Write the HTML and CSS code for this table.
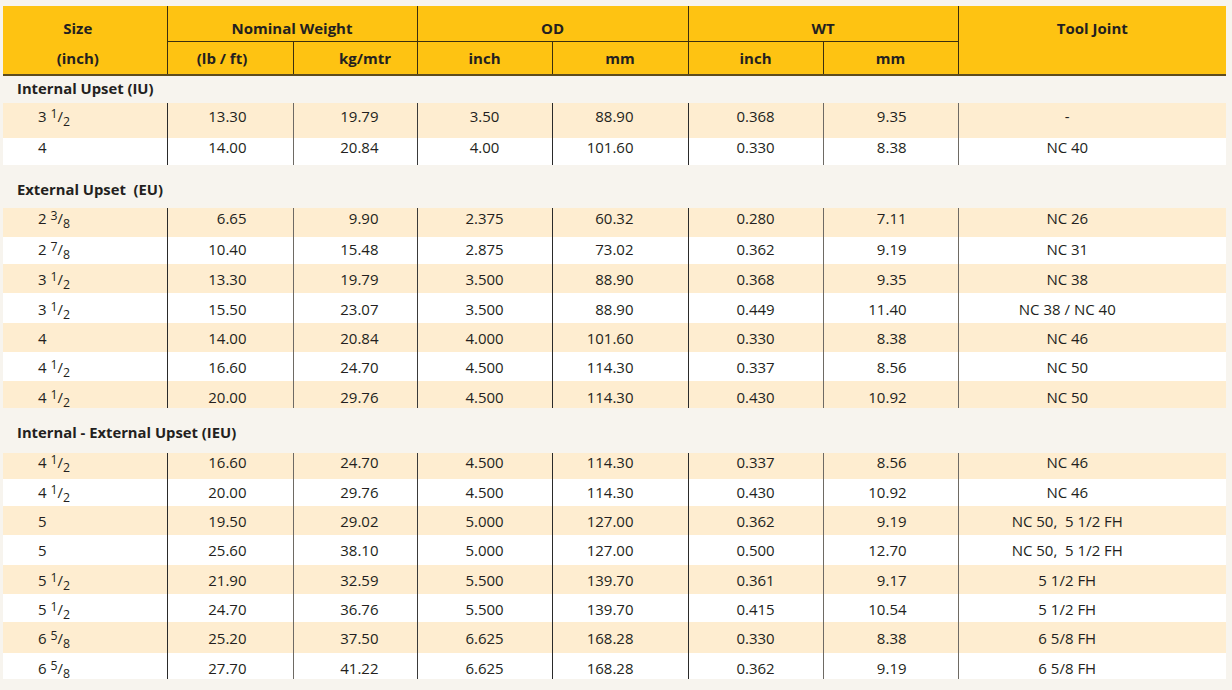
FILE: index.html
```html
<!DOCTYPE html>
<html lang="en">
<head>
<meta charset="utf-8">
<title>Drill Pipe Specifications</title>
<link rel="stylesheet" href="styles.css">
</head>
<body>
<div class="wrap">
<table class="spec">
  <colgroup>
    <col class="c1"><col class="c2"><col class="c3"><col class="c4"><col class="c5"><col class="c6"><col class="c7"><col class="c8">
  </colgroup>
  <thead>
    <tr class="h1">
      <th class="h-size">Size</th>
      <th colspan="2" class="grp">Nominal Weight</th>
      <th colspan="2" class="grp">OD</th>
      <th colspan="2" class="grp">WT</th>
      <th class="h-tool">Tool Joint</th>
    </tr>
    <tr class="h2">
      <th class="h-size">(inch)</th>
      <th class="h-lb">(lb / ft)</th>
      <th class="h-kg">kg/mtr</th>
      <th>inch</th>
      <th>mm</th>
      <th>inch</th>
      <th>mm</th>
      <th></th>
    </tr>
  </thead>
  <tbody>
    <tr class="sec sec-iu"><td colspan="8">Internal Upset (IU)</td></tr>
    <tr class="row alt h35 p5"><td>3 <span class="num">1</span>/<span class="den">2</span></td><td>13.30</td><td>19.79</td><td>3.50</td><td>88.90</td><td>0.368</td><td>9.35</td><td>-</td></tr>
    <tr class="row h27 p1"><td>4</td><td>14.00</td><td>20.84</td><td>4.00</td><td>101.60</td><td>0.330</td><td>8.38</td><td>NC 40</td></tr>

    <tr class="sec sec-eu"><td colspan="8">External Upset&nbsp; (EU)</td></tr>
    <tr class="row alt h29 p2"><td>2 <span class="num">3</span>/<span class="den">8</span></td><td>6.65</td><td>9.90</td><td>2.375</td><td>60.32</td><td>0.280</td><td>7.11</td><td>NC 26</td></tr>
    <tr class="row h27 p4"><td>2 <span class="num">7</span>/<span class="den">8</span></td><td>10.40</td><td>15.48</td><td>2.875</td><td>73.02</td><td>0.362</td><td>9.19</td><td>NC 31</td></tr>
    <tr class="row alt h29 p7"><td>3 <span class="num">1</span>/<span class="den">2</span></td><td>13.30</td><td>19.79</td><td>3.500</td><td>88.90</td><td>0.368</td><td>9.35</td><td>NC 38</td></tr>
    <tr class="row h30 p8"><td>3 <span class="num">1</span>/<span class="den">2</span></td><td>15.50</td><td>23.07</td><td>3.500</td><td>88.90</td><td>0.449</td><td>11.40</td><td>NC 38 / NC 40</td></tr>
    <tr class="row alt h29 p7"><td>4</td><td>14.00</td><td>20.84</td><td>4.000</td><td>101.60</td><td>0.330</td><td>8.38</td><td>NC 46</td></tr>
    <tr class="row h29 p7"><td>4 <span class="num">1</span>/<span class="den">2</span></td><td>16.60</td><td>24.70</td><td>4.500</td><td>114.30</td><td>0.337</td><td>8.56</td><td>NC 50</td></tr>
    <tr class="row alt h27 p8"><td>4 <span class="num">1</span>/<span class="den">2</span></td><td>20.00</td><td>29.76</td><td>4.500</td><td>114.30</td><td>0.430</td><td>10.92</td><td>NC 50</td></tr>

    <tr class="sec sec-ieu"><td colspan="8">Internal - External Upset (IEU)</td></tr>
    <tr class="row alt h26 p1"><td>4 <span class="num">1</span>/<span class="den">2</span></td><td>16.60</td><td>24.70</td><td>4.500</td><td>114.30</td><td>0.337</td><td>8.56</td><td>NC 46</td></tr>
    <tr class="row h27 p5"><td>4 <span class="num">1</span>/<span class="den">2</span></td><td>20.00</td><td>29.76</td><td>4.500</td><td>114.30</td><td>0.430</td><td>10.92</td><td>NC 46</td></tr>
    <tr class="row alt h29 p7"><td>5</td><td>19.50</td><td>29.02</td><td>5.000</td><td>127.00</td><td>0.362</td><td>9.19</td><td>NC 50,&nbsp; 5 1/2 FH</td></tr>
    <tr class="row h30 p7"><td>5</td><td>25.60</td><td>38.10</td><td>5.000</td><td>127.00</td><td>0.500</td><td>12.70</td><td>NC 50,&nbsp; 5 1/2 FH</td></tr>
    <tr class="row alt h29 p7"><td>5 <span class="num">1</span>/<span class="den">2</span></td><td>21.90</td><td>32.59</td><td>5.500</td><td>139.70</td><td>0.361</td><td>9.17</td><td>5 1/2 FH</td></tr>
    <tr class="row h28 p7"><td>5 <span class="num">1</span>/<span class="den">2</span></td><td>24.70</td><td>36.76</td><td>5.500</td><td>139.70</td><td>0.415</td><td>10.54</td><td>5 1/2 FH</td></tr>
    <tr class="row alt h31 p8"><td>6 <span class="num">5</span>/<span class="den">8</span></td><td>25.20</td><td>37.50</td><td>6.625</td><td>168.28</td><td>0.330</td><td>8.38</td><td>6 5/8 FH</td></tr>
    <tr class="row h26 p7"><td>6 <span class="num">5</span>/<span class="den">8</span></td><td>27.70</td><td>41.22</td><td>6.625</td><td>168.28</td><td>0.362</td><td>9.19</td><td>6 5/8 FH</td></tr>
  </tbody>
</table>
</div>
</body>
</html>
```

FILE: styles.css
```css
html, body {
  margin: 0;
  padding: 0;
  background: #f7f4ee;
}
body {
  font-family: "Open Sans", "Liberation Sans", sans-serif;
  color: #231f20;
}
.wrap {
  padding: 6px 6px 0 3px;
}
.spec {
  width: 1223px;
  table-layout: fixed;
  border-collapse: collapse;
  border-spacing: 0;
}
.c1 { width: 164px; }
.c2 { width: 126px; }
.c3 { width: 124px; }
.c4 { width: 135px; }
.c5 { width: 136px; }
.c6 { width: 135px; }
.c7 { width: 135px; }
.c8 { width: 268px; }

/* header */
.spec th {
  background: #fec312;
  font-weight: 700;
  font-size: 15px;
  line-height: 18px;
  padding: 0;
  text-align: center;
  color: #231f20;
}
.h1 th {
  height: 35px;
  vertical-align: top;
  padding-top: 13px;
  box-sizing: border-box;
}
.h1 th.grp {
  border-bottom: 1px solid #3a2e0e;
}
.h1 th + th,
.h2 th + th {
  border-left: 1px solid #3a2e0e;
}
.h2 th {
  height: 34px;
  box-sizing: border-box;
  vertical-align: middle;
  padding-top: 0;
  border-bottom: 2px solid #5e4c1e;
}
.h2 th.h-lb { padding-right: 16px; }
.h2 th.h-kg { padding-left: 20px; }
.h-size { padding-right: 14px !important; }

/* section title rows */
.sec td {
  background: #f7f4ee;
  font-weight: 700;
  font-size: 14.8px;
  line-height: 18px;
  padding: 0 0 0 14px;
  vertical-align: middle;
  box-sizing: border-box;
}
.sec-iu td { height: 28px; padding-bottom: 3px; }
.sec-eu td { height: 43px; padding-top: 5px; }
.sec-ieu td { height: 45px; padding-top: 3px; }

/* data rows */
.row td {
  background: #ffffff;
  font-size: 15px;
  line-height: 18px;
  padding: 2px 0 0 0;
  vertical-align: top;
  box-sizing: border-box;
  text-align: center;
  white-space: nowrap;
}
.row.alt td { background: #feedd0; }

.h26 td { height: 26px; }
.h27 td { height: 27px; }
.h28 td { height: 28px; }
.h29 td { height: 29px; }
.h30 td { height: 30px; }
.h31 td { height: 31px; }
.h35 td { height: 35px; }

.row.p1 td { padding-top: 0; }
.row.p2 td { padding-top: 1px; }
.row.p4 td { padding-top: 3px; }
.row.p5 td { padding-top: 4px; }
.row.p7 td { padding-top: 6px; }
.row.p8 td { padding-top: 7px; }

.row td:nth-child(1) { text-align: left; padding-left: 35px; }
.row td:nth-child(2) { text-align: right; padding-right: 46px; border-left: 1px solid #2a2a2a; }
.row td:nth-child(3) { text-align: right; padding-right: 38px; border-left: 1px solid #6e6a64; }
.row td:nth-child(4) { border-left: 1px solid #3a3a3a; }
.row td:nth-child(5) { text-align: right; padding-right: 54px; border-left: 1px solid #2a2a2a; }
.row td:nth-child(6) { border-left: 1px solid #2a2a2a; }
.row td:nth-child(7) { text-align: right; padding-right: 51px; border-left: 1px solid #6e6a64; }
.row td:nth-child(8) { border-left: 1px solid #6e6a64; padding-right: 50px; }

.num, .den {
  font-size: 0.82em;
  line-height: 0;
}
.num { vertical-align: 4px; }
.den { vertical-align: -4px; }
```
